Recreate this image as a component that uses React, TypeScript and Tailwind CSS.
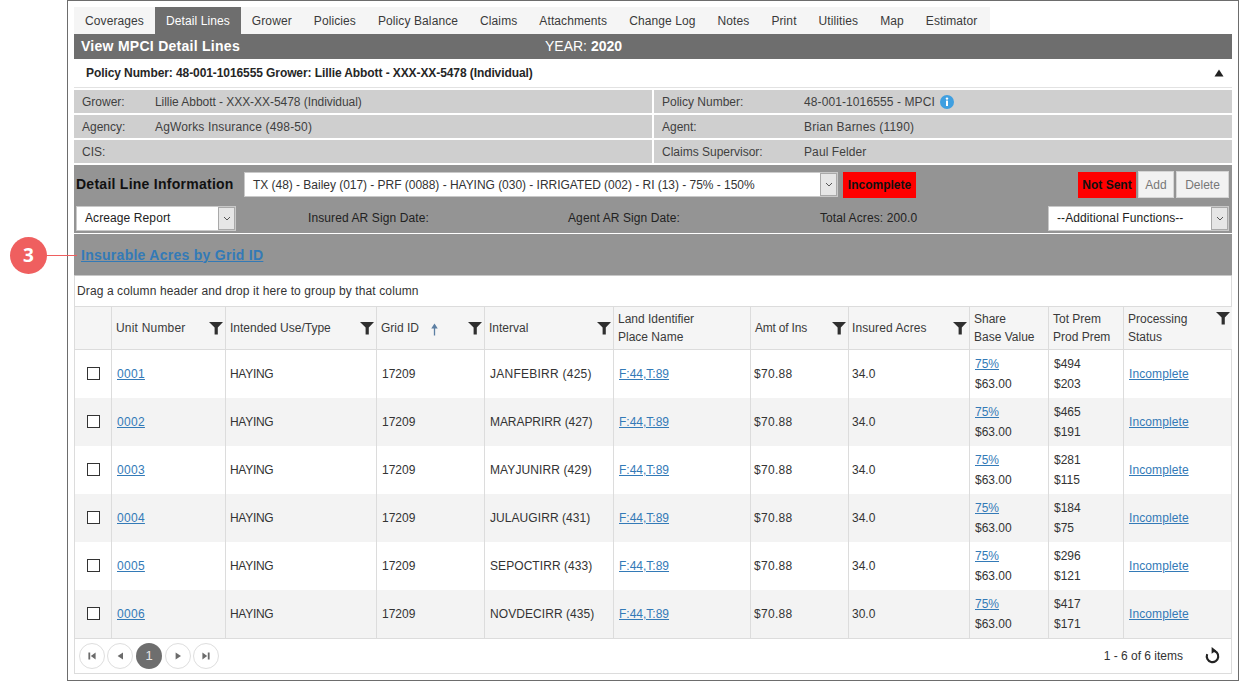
import React from "react";

const font = { fontFamily: '"Liberation Sans", Arial, sans-serif' };

const tabs = ["Coverages", "Detail Lines", "Grower", "Policies", "Policy Balance", "Claims", "Attachments", "Change Log", "Notes", "Print", "Utilities", "Map", "Estimator"];

const rows = [
  ["0001", "JANFEBIRR (425)", "34.0", "$494", "$203", "tracking-[0.25px]"],
  ["0002", "MARAPRIRR (427)", "34.0", "$465", "$191", "tracking-[-0.07px]"],
  ["0003", "MAYJUNIRR (429)", "34.0", "$281", "$115", "tracking-[0.1px]"],
  ["0004", "JULAUGIRR (431)", "34.0", "$184", "$75", "tracking-[0.07px]"],
  ["0005", "SEPOCTIRR (433)", "34.0", "$296", "$121", "tracking-[0.07px]"],
  ["0006", "NOVDECIRR (435)", "30.0", "$417", "$171", "tracking-[0.07px]"],
];

const cols = "grid grid-cols-[36px_114px_151px_108px_129px_137px_98px_121px_79px_75px_109px]";
const link = "text-[#337ab7] underline";

function Filter({ className = "" }: { className?: string }) {
  return (
    <svg viewBox="0 0 14 14" className={`w-[14px] h-[14px] shrink-0 ${className}`}>
      <path d="M0 1H14L8.8 6.6V13.5H5.6V6.6Z" fill="#2f2f2f" />
    </svg>
  );
}

function Chevron() {
  return (
    <span className="w-[17px] h-full bg-[#e6e6e6] border border-[#a9a9a9] flex items-center justify-center shrink-0">
      <svg viewBox="0 0 8 5" className="w-[8px] h-[5px]">
        <path d="M1 1L4 4L7 1" fill="none" stroke="#555" strokeWidth="1" />
      </svg>
    </span>
  );
}

function Head({ lines, filter = true, children, top = false, className = "pl-[4px]" }: { lines: string[]; filter?: boolean; children?: React.ReactNode; top?: boolean; className?: string }) {
  return (
    <div className={`relative flex items-center border-l border-[#dcdcdc] pr-[2px] bg-[#f5f5f5] text-[#3a3a3a] ${className}`}>
      <div className="flex-1 leading-[18px]">
        {lines.map((l) => (
          <div key={l}>{l}</div>
        ))}
      </div>
      {children}
      {filter && <Filter className={top ? "self-start mt-[4px]" : ""} />}
    </div>
  );
}

function Cell({ children, className = "pl-[5px]" }: { children: React.ReactNode; className?: string }) {
  return <div className={`flex flex-col justify-center border-l border-[#dcdcdc] ${className}`}>{children}</div>;
}

function Info({ label, value, w, children, track = "" }: { label: string; value: string; w: string; children?: React.ReactNode; track?: string }) {
  return (
    <div className="h-[23px] bg-[#cfcfcf] flex items-center pl-[8px] text-[#3f3f3f]">
      <span className={`${w} shrink-0`}>{label}</span>
      <span className={track}>{value}</span>
      {children}
    </div>
  );
}

function PageButton({ children, className = "" }: { children: React.ReactNode; className?: string }) {
  return <span className={`w-[26px] h-[26px] rounded-full border border-[#dedede] bg-white flex items-center justify-center ${className}`}>{children}</span>;
}

function Glyph({ d }: { d: string }) {
  return (
    <svg viewBox="0 0 10 10" className="w-[12px] h-[12px]">
      <path d={d} fill="#6b6b6b" />
    </svg>
  );
}

export default function App() {
  return (
    <div style={font} className="relative w-[1239px] h-[681px] bg-white text-[12px] text-[#333333] overflow-hidden">
      <div className="absolute left-[10px] top-[237px] w-[37px] h-[37px] rounded-full bg-[#ef5f5f] flex items-center justify-center text-white font-bold text-[19px]" style={{ fontFamily: '"Open Sans", sans-serif' }}>
        3
      </div>
      <div className="absolute left-[47px] top-[255px] w-[30px] h-[1px] bg-[#ef5f5f]" />

      <div className="ml-[67px] w-[1172px] h-[681px] border border-[#6d6d6d] pl-[6px] pr-[6px] pt-[6px]">
        <div className="flex h-[27px] w-[916px] bg-[#f5f5f5] tracking-[0.1px] text-[#3a3a3a] whitespace-nowrap">
          {tabs.map((t, i) => (
            <div key={t} className={`h-full shrink-0 flex items-center px-[11px] ${i === 1 ? "bg-[#6e6e6e] text-white" : ""}`}>
              {t}
            </div>
          ))}
        </div>
        <div className="h-[25px] bg-[#6e6e6e] flex items-center text-white pl-[7px]">
          <span className="font-bold text-[14px] w-[464px] tracking-[0.27px]">View MPCI Detail Lines</span>
          <span className="text-[14px]">
            YEAR: <b>2020</b>
          </span>
        </div>
        <div className="h-[29px] flex items-center justify-between pl-[12px] pr-[8px] pb-[1px] font-bold text-[#262626] border-b border-[#e2e2e2]">
          <span className="text-[12px] tracking-[-0.09px]">Policy Number: 48-001-1016555 Grower: Lillie Abbott - XXX-XX-5478 (Individual)</span>
          <svg viewBox="0 0 10 8" className="w-[10px] h-[8px]">
            <path d="M5 0.5L9.5 7.5H0.5Z" fill="#222" />
          </svg>
        </div>
        <div className="mt-[2px] grid grid-cols-[578px_578px] gap-x-[2px] gap-y-[2px]">
          <Info label="Grower:" value="Lillie Abbott - XXX-XX-5478 (Individual)" w="w-[73px]" track="tracking-[-0.05px]" />
          <Info label="Policy Number:" value="48-001-1016555 - MPCI" w="w-[142px]" track="tracking-[0.1px]">
            <svg viewBox="0 0 14 14" className="w-[14px] h-[14px] ml-[5px]">
              <circle cx="7" cy="7" r="7" fill="#3f9fe0" />
              <circle cx="7" cy="3.6" r="1.2" fill="#fff" />
              <rect x="6" y="5.6" width="2" height="5.4" fill="#fff" />
            </svg>
          </Info>
          <Info label="Agency:" value="AgWorks Insurance (498-50)" w="w-[73px]" track="tracking-[0.15px]" />
          <Info label="Agent:" value="Brian Barnes (1190)" w="w-[142px]" track="tracking-[0.2px]" />
          <Info label="CIS:" value="" w="w-[73px]" />
          <Info label="Claims Supervisor:" value="Paul Felder" w="w-[142px]" track="tracking-[0.1px]" />
        </div>

        <div className="mt-[2px] h-[69px] bg-[#949494] border-b border-white flex flex-col">
          <div className="h-[39px] flex items-center pl-[2px] pr-[3px]">
            <span className="font-bold text-[14px] text-[#111] w-[168px] shrink-0 tracking-[0.26px]">Detail Line Information</span>
            <div className="w-[594px] h-[25px] bg-white border border-[#c9c9c9] flex items-center justify-between pl-[8px]">
              <span className="tracking-[-0.03px]">TX (48) - Bailey (017) - PRF (0088) - HAYING (030) - IRRIGATED (002) - RI (13) - 75% - 150%</span>
              <Chevron />
            </div>
            <span className="ml-[5px] w-[73px] h-[26px] bg-[#ff0000] text-[#111] font-bold flex items-center justify-center">Incomplete</span>
            <div className="flex-1" />
            <span className="w-[58px] h-[26px] bg-[#ff0000] text-[#111] font-bold flex items-center justify-center">Not Sent</span>
            <span className="ml-[2px] w-[36px] h-[27px] bg-[#f2f2f2] border border-[#d5d5d5] text-[#777] flex items-center justify-center">Add</span>
            <span className="ml-[2px] w-[53px] h-[27px] bg-[#f2f2f2] border border-[#d5d5d5] text-[#777] flex items-center justify-center">Delete</span>
          </div>
          <div className="h-[28px] flex items-center pl-[2px] pr-[3px] text-[#222] tracking-[0.1px]">
            <div className="w-[160px] h-[25px] bg-white border border-[#c9c9c9] flex items-center justify-between pl-[8px]">
              <span>Acreage Report</span>
              <Chevron />
            </div>
            <span className="ml-[72px] w-[260px]">Insured AR Sign Date:</span>
            <span className="w-[252px]">Agent AR Sign Date:</span>
            <span>Total Acres: 200.0</span>
            <div className="flex-1" />
            <div className="w-[181px] h-[25px] bg-white border border-[#c9c9c9] flex items-center justify-between pl-[8px]">
              <span>--Additional Functions--</span>
              <Chevron />
            </div>
          </div>
        </div>

        <div className="h-[42px] bg-[#949494] flex items-center pl-[7px] pt-[1px] border-b border-[#c8c8c8]">
          <span className="text-[14px] font-bold text-[#337ab7] underline tracking-[0.27px]">Insurable Acres by Grid ID</span>
        </div>

        <div className="w-[1158px] border-x border-b border-[#dcdcdc]">
          <div className="h-[31px] flex items-center pl-[2px] border-b border-[#dcdcdc] tracking-[0.11px]">Drag a column header and drop it here to group by that column</div>
          <div className={`${cols} h-[43px] border-b border-[#dcdcdc] bg-[#f5f5f5]`}>
            <div className="bg-[#f5f5f5]" />
            <Head lines={["Unit Number"]} className="pl-[4px] tracking-[0.2px]" />
            <Head lines={["Intended Use/Type"]} />
            <Head lines={["Grid ID"]}>
              <svg viewBox="0 0 8 12" className="w-[9px] h-[13px] absolute left-[53px] top-[16px]">
                <path d="M4 0.5L7 5H4.6V11.5H3.4V5H1Z" fill="#5c7fa3" />
              </svg>
            </Head>
            <Head lines={["Interval"]} />
            <Head lines={["Land Identifier", "Place Name"]} filter={false} />
            <Head lines={["Amt of Ins"]} className="pl-[4px] tracking-[-0.2px]" />
            <Head lines={["Insured Acres"]} className="pl-[3px] tracking-[0.1px]" />
            <Head lines={["Share", "Base Value"]} filter={false} />
            <Head lines={["Tot Prem", "Prod Prem"]} filter={false} />
            <Head lines={["Processing", "Status"]} top />
          </div>
          {rows.map((r, i) => (
            <div key={r[0]} className={`${cols} h-[48px] ${i % 2 ? "bg-[#f3f3f3]" : "bg-white"}`}>
              <div className="flex items-center justify-center pb-[2px]">
                <span className="w-[13px] h-[13px] border border-[#333] bg-white" />
              </div>
              <Cell>
                <span className={`${link} tracking-[0.3px]`}>{r[0]}</span>
              </Cell>
              <Cell className="pl-[4px] tracking-[-0.3px]">HAYING</Cell>
              <Cell>17209</Cell>
              <Cell className={`pl-[5px] ${r[5]}`}>{r[1]}</Cell>
              <Cell>
                <span className={link}>F:44,T:89</span>
              </Cell>
              <Cell className="pl-[3px] tracking-[0.3px]">$70.88</Cell>
              <Cell className="pl-[3px]">{r[2]}</Cell>
              <Cell className="pl-[5px] leading-[20px]">
                <span>
                  <span className={link}>75%</span>
                </span>
                <span>$63.00</span>
              </Cell>
              <Cell className="pl-[5px] leading-[20px]">
                <span>{r[3]}</span>
                <span>{r[4]}</span>
              </Cell>
              <Cell>
                <span className={`${link} tracking-[0.1px]`}>Incomplete</span>
              </Cell>
            </div>
          ))}
          <div className="h-[35px] border-t border-[#dcdcdc] flex items-center pl-[4px] pr-[10px] pb-[1px]">
            <PageButton>
              <Glyph d="M2 2H3.5V8H2ZM8 2V8L4 5Z" />
            </PageButton>
            <PageButton className="ml-[2px]">
              <Glyph d="M7.5 2V8L3 5Z" />
            </PageButton>
            <span className="ml-[3px] w-[26px] h-[26px] rounded-full bg-[#6e6e6e] text-[#e8e8e8] text-[13px] flex items-center justify-center">1</span>
            <PageButton className="ml-[3px]">
              <Glyph d="M3 2V8L7.5 5Z" />
            </PageButton>
            <PageButton className="ml-[2px]">
              <Glyph d="M2 2L6 5L2 8ZM6.5 2H8V8H6.5Z" />
            </PageButton>
            <div className="flex-1" />
            <span className="mr-[21px]">1 - 6 of 6 items</span>
            <svg viewBox="0 0 16 16" className="w-[17px] h-[17px]">
              <path d="M8 3.4A5.4 5.4 0 1 1 3 6.8" fill="none" stroke="#222" strokeWidth="2" />
              <path d="M7.2 0L11.4 3.2L7.2 6.4Z" fill="#222" />
            </svg>
          </div>
        </div>
      </div>
    </div>
  );
}
